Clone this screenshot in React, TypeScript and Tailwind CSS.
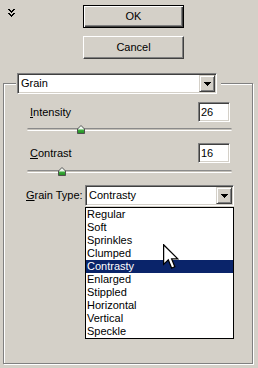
import React from 'react';

const raised =
  'border border-t-white border-l-white border-b-[#404040] border-r-[#404040] shadow-[inset_-1px_-1px_0_#808080]';
const sunken =
  'border border-t-[#808080] border-l-[#808080] border-b-white border-r-white shadow-[inset_1px_1px_0_#404040,inset_-1px_-1px_0_#d4d0c8]';

function MoreIcon() {
  // two stacked down-chevrons
  const px: [number, number][] = [
    [0, 0], [1, 0], [5, 0], [6, 0],
    [1, 1], [2, 1], [4, 1], [5, 1],
    [2, 2], [3, 2], [4, 2],
    [3, 3],
    [0, 4], [1, 4], [5, 4], [6, 4],
    [1, 5], [2, 5], [4, 5], [5, 5],
    [2, 6], [3, 6], [4, 6],
    [3, 7],
  ];
  return (
    <svg width="7" height="8" viewBox="0 0 7 8" shapeRendering="crispEdges">
      {px.map(([x, y]) => (
        <rect key={`${x}-${y}`} x={x} y={y} width="1" height="1" fill="#000" />
      ))}
    </svg>
  );
}

function ArrowButton() {
  return (
    <div
      className={`w-[16px] h-[17px] bg-[#d4d0c8] flex items-center justify-center border border-t-[#d4d0c8] border-l-[#d4d0c8] border-b-[#404040] border-r-[#404040] shadow-[inset_1px_1px_0_#fff,inset_-1px_-1px_0_#808080]`}
    >
      <svg width="7" height="4" viewBox="0 0 7 4" shapeRendering="crispEdges">
        <path d="M0 0h7v1H0zM1 1h5v1H1zM2 2h3v1H2zM3 3h1v1H3z" fill="#000" />
      </svg>
    </div>
  );
}

function Combo({ value, width }: { value: string; width: string }) {
  return (
    <div className={`${width} h-[21px] bg-white flex items-center ${sunken} p-[1px]`}>
      <span className="flex-1 pl-[2px] text-[11px] leading-[13px] text-black">{value}</span>
      <ArrowButton />
    </div>
  );
}

function Thumb() {
  return (
    <svg width="8" height="9" viewBox="0 0 8 9">
      <defs>
        <linearGradient id="tg" x1="0" y1="0" x2="0" y2="1">
          <stop offset="0" stopColor="#ffffff" />
          <stop offset="0.45" stopColor="#e8f5e8" />
          <stop offset="0.55" stopColor="#3fae3f" />
          <stop offset="1" stopColor="#1f8a1f" />
        </linearGradient>
      </defs>
      <path d="M4 0.5 L7.5 4 L7.5 8.5 L0.5 8.5 L0.5 4 Z" fill="url(#tg)" stroke="#505050" strokeWidth="1" />
    </svg>
  );
}

function Slider({ thumbLeft }: { thumbLeft: string }) {
  return (
    <div className="relative w-[205px] h-[10px] flex items-center">
      <div className="w-full h-[3px] rounded-full border-t border-t-[#8a8a8a] border-b border-b-white bg-[#c4c0b8]" />
      <div className={`absolute top-[1px] ${thumbLeft}`}>
        <Thumb />
      </div>
    </div>
  );
}

function NumberRow({ label, rest, value }: { label: string; rest: string; value: string }) {
  return (
    <div className="w-[203px] flex items-center">
      <span className="flex-1 ml-[3px] text-[11px] text-black">
        <span className="underline underline-offset-[1px]">{label}</span>
        {rest}
      </span>
      <div className={`w-[32px] h-[20px] bg-white flex items-center ${sunken} pl-[2px]`}>
        <span className="text-[11px] text-black">{value}</span>
      </div>
    </div>
  );
}

function Cursor() {
  return (
    <svg width="16" height="26" viewBox="0 0 13 21">
      <path
        d="M0.5 0.5 L0.5 16.5 L4.3 12.8 L7 19.5 L9.6 18.4 L7 12 L12 12 Z"
        fill="#fff"
        stroke="#000"
        strokeWidth="1"
        strokeLinejoin="miter"
      />
    </svg>
  );
}

const types = [
  'Regular',
  'Soft',
  'Sprinkles',
  'Clumped',
  'Contrasty',
  'Enlarged',
  'Stippled',
  'Horizontal',
  'Vertical',
  'Speckle',
];

export default function App() {
  return (
    <div
      className="w-[258px] h-[368px] bg-[#d4d0c8] flex flex-col overflow-hidden"
      style={{ fontFamily: '"Liberation Sans", Arial, sans-serif' }}
    >
      <div className="h-[83px] flex shrink-0">
        <div className="pl-[8px] pt-[9px] w-[83px]">
          <MoreIcon />
        </div>
        <div className="pt-[5px] flex flex-col gap-[8px]">
          <button className="w-[101px] h-[23px] border border-black bg-[#d4d0c8] shadow-[inset_1px_1px_0_#fff,inset_-1px_-1px_0_#404040,inset_-2px_-2px_0_#808080] text-[11px] text-black">
            OK
          </button>
          <button className={`w-[101px] h-[23px] bg-[#d4d0c8] ${raised} text-[11px] text-black`}>
            Cancel
          </button>
        </div>
      </div>

      <div className="ml-[3px] mr-[5px] mb-[4px] flex-1 border border-[#808080] shadow-[inset_1px_1px_0_#fff,1px_1px_0_#fff] flex flex-col">
        <div className="-mt-[11px] ml-[12px] self-start bg-[#d4d0c8] pl-[1px] pr-[4px]">
          <Combo value="Grain" width="w-[200px]" />
        </div>

        <div className="pl-[23px] flex flex-col">
          <div className="mt-[8px]">
            <NumberRow label="I" rest="ntensity" value="26" />
          </div>
          <div className="mt-[2px]">
            <Slider thumbLeft="left-[50px]" />
          </div>
          <div className="mt-[9px]">
            <NumberRow label="C" rest="ontrast" value="16" />
          </div>
          <div className="mt-[3px]">
            <Slider thumbLeft="left-[31px]" />
          </div>
          <div className="mt-[9px] flex items-center -ml-[1px]">
            <span className="w-[59px] text-[11px] text-black">
              <span className="underline underline-offset-[1px]">G</span>rain Type:
            </span>
            <div className="relative">
              <Combo value="Contrasty" width="w-[149px]" />
              <div className="absolute left-0 top-[22px] w-[149px] bg-white border border-black flex flex-col z-10">
                {types.map((t) => (
                  <div
                    key={t}
                    className={`h-[13px] leading-[13px] pl-[1px] text-[11px] ${
                      t === 'Contrasty' ? 'bg-[#0a246a] text-white' : 'text-black'
                    }`}
                  >
                    {t}
                  </div>
                ))}
              </div>
              <div className="absolute left-[78px] top-[59px] z-20">
                <Cursor />
              </div>
            </div>
          </div>
        </div>
      </div>
    </div>
  );
}
